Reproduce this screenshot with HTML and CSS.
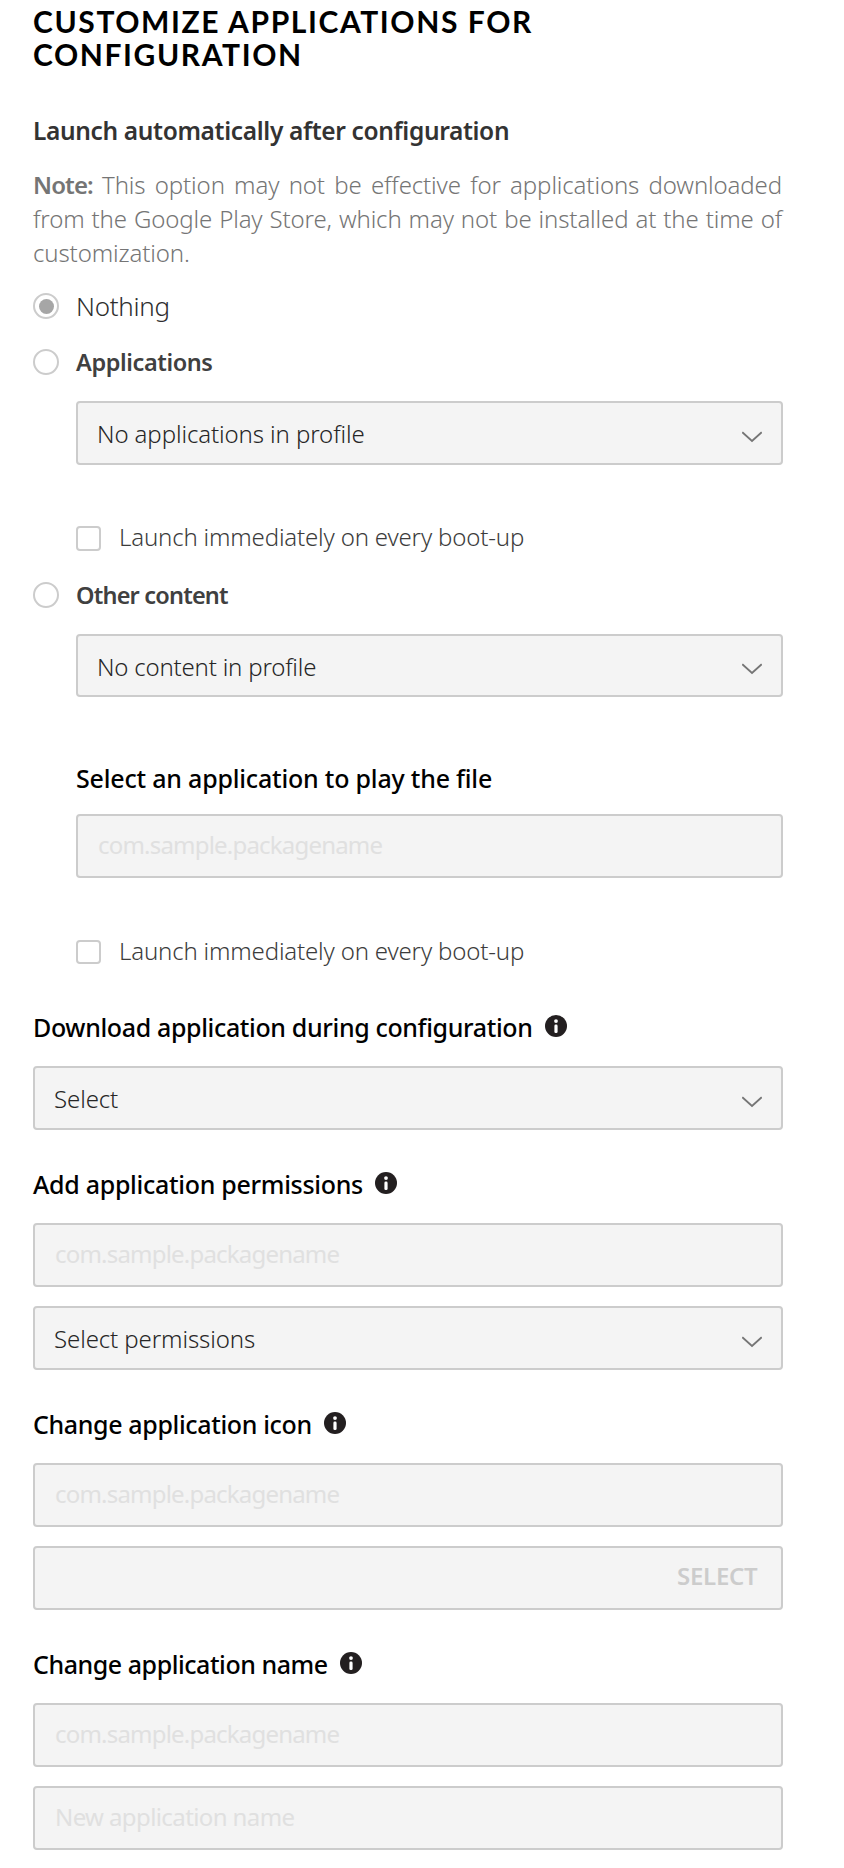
FILE: index.html
```
<!DOCTYPE html>
<html lang="en">
<head>
<meta charset="utf-8">
<title>Customize applications for configuration</title>
<link rel="stylesheet" href="styles.css">
</head>
<body>
<svg class="defs" width="0" height="0">
  <symbol id="chevron" viewBox="0 0 20 12"><path d="M0.3 1.2 L10 10 L19.7 1.2" fill="none" stroke="#757575" stroke-width="1.8"/></symbol>
  <symbol id="info" viewBox="0 0 22 22"><circle cx="11" cy="11" r="11" fill="#231f20"/><circle cx="11" cy="6.1" r="1.9" fill="#fff"/><rect x="9.4" y="9.6" width="3.2" height="8.4" rx="1.3" fill="#fff"/></symbol>
</svg>
<main class="form">
  <h1 class="heading">CUSTOMIZE APPLICATIONS FOR<br>CONFIGURATION</h1>
  <h2 class="subheading">Launch automatically after configuration</h2>
  <p class="note"><strong>Note:</strong> This option may not be effective for applications downloaded from the Google Play Store, which may not be installed at the time of customization.</p>

  <div class="radio-row"><span class="radio radio-on"></span><span class="radio-text light">Nothing</span></div>
  <div class="radio-row next"><span class="radio"></span><span class="radio-text">Applications</span></div>
  <div class="nested">
    <div class="field select"><span>No applications in profile</span><svg class="chevron"><use href="#chevron"/></svg></div>
    <div class="check-row"><span class="checkbox"></span><span class="check-text">Launch immediately on every boot-up</span></div>
  </div>
  <div class="radio-row other"><span class="radio"></span><span class="radio-text tight">Other content</span></div>
  <div class="nested">
    <div class="field select short"><span>No content in profile</span><svg class="chevron"><use href="#chevron"/></svg></div>
    <h3 class="label player">Select an application to play the file</h3>
    <div class="field input"><span>com.sample.packagename</span></div>
    <div class="check-row low"><span class="checkbox"></span><span class="check-text">Launch immediately on every boot-up</span></div>
  </div>

  <section class="group first">
    <h3 class="label"><span>Download application during configuration</span><svg class="info"><use href="#info"/></svg></h3>
    <div class="field select"><span>Select</span><svg class="chevron"><use href="#chevron"/></svg></div>
  </section>
  <section class="group">
    <h3 class="label permissions"><span>Add application permissions</span><svg class="info"><use href="#info"/></svg></h3>
    <div class="field input"><span>com.sample.packagename</span></div>
    <div class="field select"><span>Select permissions</span><svg class="chevron"><use href="#chevron"/></svg></div>
  </section>
  <section class="group">
    <h3 class="label"><span>Change application icon</span><svg class="info"><use href="#info"/></svg></h3>
    <div class="field input"><span>com.sample.packagename</span></div>
    <div class="field file"><span>SELECT</span></div>
  </section>
  <section class="group">
    <h3 class="label rename"><span>Change application name</span><svg class="info"><use href="#info"/></svg></h3>
    <div class="field input"><span>com.sample.packagename</span></div>
    <div class="field input wide"><span>New application name</span></div>
  </section>
</main>
</body>
</html>
```
FILE: styles.css
```
* { box-sizing: border-box; }
body { margin: 0; background: #fff; font-family: "Noto Sans", "Open Sans", sans-serif; font-size: 24px; font-weight: 300; color: #3a3a3a; }
h1, h2, h3, p { margin: 0; }
.defs { display: block; }
.form { display: flex; flex-direction: column; width: 750px; margin-left: 33px; padding: 5px 0 18px; }
.heading { font: 700 30px/33px Lato, sans-serif; letter-spacing: 1.6px; color: #000; }
.subheading { margin-top: 43px; font-size: 24.5px; line-height: 34px; font-weight: 600; letter-spacing: -0.35px; color: #333; }
.note { margin: 20px 1px 23px 0; line-height: 34px; color: #757575; text-align: justify; letter-spacing: -0.12px; }
.note strong { font-weight: 600; letter-spacing: -0.9px; }

.radio-row { display: flex; align-items: center; height: 26px; gap: 17px; }
.radio-row.next { margin-top: 30px; }
.radio-row.other { margin-top: 31px; }
.radio { display: grid; place-items: center; width: 26px; height: 26px; border: 2px solid #ccc; border-radius: 50%; }
.radio-on::after { content: ""; width: 15px; height: 15px; border-radius: 50%; background: #a6a6a6; }
.radio-text { font-weight: 600; font-size: 23.5px; letter-spacing: -0.4px; color: #404040; }
.radio-text.tight { letter-spacing: -0.8px; }
.radio-text.light { font-weight: 300; font-size: 26px; letter-spacing: -0.3px; color: #2e2e2e; }

.nested { margin: 26px 0 0 43px; }
.field { display: flex; align-items: center; justify-content: space-between; height: 64px; border: 2px solid #ccc; border-radius: 4px; background: #f4f4f4; white-space: nowrap; }
.select { padding: 1px 19px 0; letter-spacing: -0.1px; color: #262626; }
.short { height: 63px; letter-spacing: -0.2px; }
.input { padding: 0 20px 4px; font-weight: 400; color: #e0e0e0; letter-spacing: -0.8px; }
.input.wide { letter-spacing: -0.6px; }
.file { justify-content: flex-end; padding: 0 23.5px 5px; font-weight: 600; color: #ccc; letter-spacing: -0.25px; }
.chevron { width: 20px; height: 12px; margin-top: 6px; }

.check-row { display: flex; align-items: center; gap: 18px; height: 25px; margin-top: 61px; }
.check-row.low { height: 24px; margin-top: 62px; }
.checkbox { width: 25px; height: 100%; border: 2px solid #ccc; border-radius: 4px; }
.check-text { padding-bottom: 4px; letter-spacing: -0.17px; color: #3c3c3c; }
.low .check-text { padding-bottom: 3px; }

.label { display: flex; align-items: center; height: 34px; font-size: 25px; font-weight: 500; line-height: 34px; letter-spacing: -0.36px; color: #000; white-space: nowrap; }
.label.player { margin: 64px 0 19px; letter-spacing: -0.2px; }
.label.permissions { letter-spacing: -0.3px; }
.label.rename { letter-spacing: -0.45px; }
.info { width: 22px; height: 22px; margin: 0 0 2px 12px; }
.group { display: flex; flex-direction: column; gap: 19px; margin-top: 37px; }
.group.first { margin-top: 46px; }
.group .label { margin-bottom: 3px; }
```
